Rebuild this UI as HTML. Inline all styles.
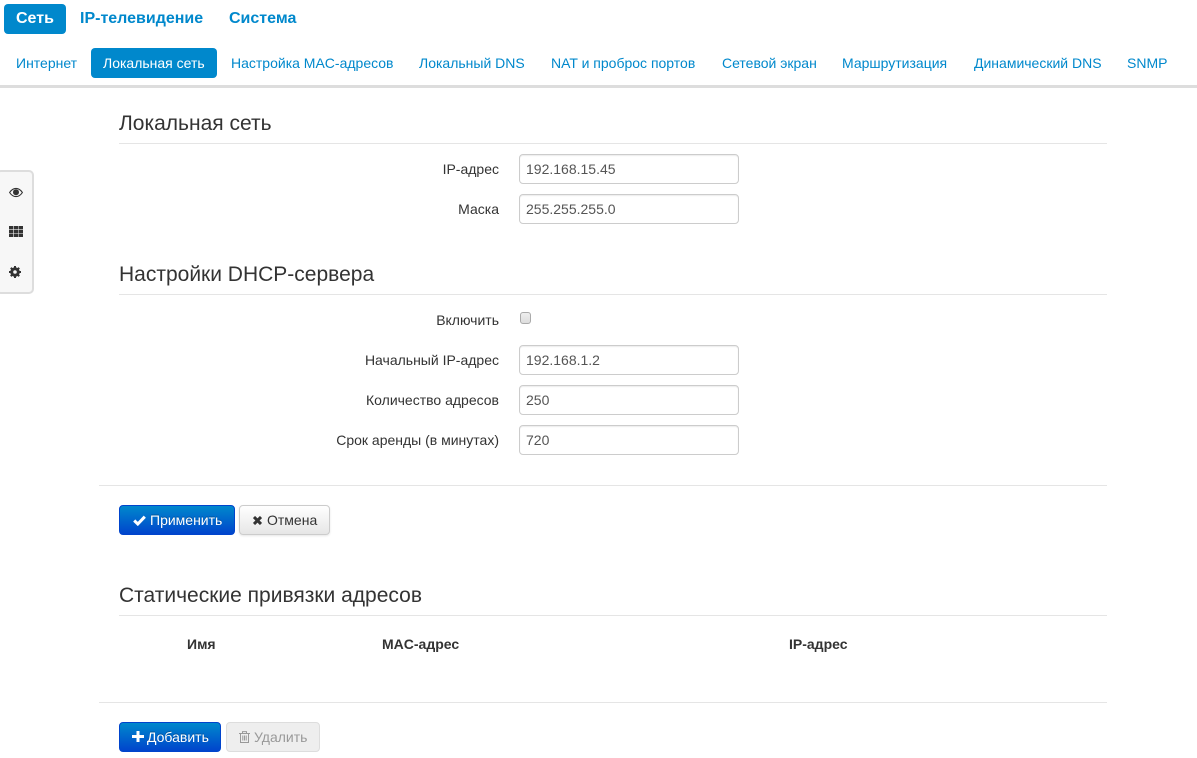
<!DOCTYPE html>
<html><head><meta charset="utf-8">
<style>
html,body{margin:0;padding:0;background:#fff;width:1197px;height:758px;overflow:hidden}
body{position:relative;font-family:"Liberation Sans",sans-serif;font-size:14px;color:#333}
.a{position:absolute;white-space:nowrap}
.t{font-weight:bold;font-size:16px;color:#0088cc;line-height:30px;top:4px}
.s{color:#0088cc;line-height:30px;top:48px}
.pill{position:absolute;background:#0088cc;border-radius:4px}
.h{left:119px;font-size:21px;line-height:24px;color:#333}
.hr{position:absolute;height:1px;background:#e5e5e5}
.l{right:698px;line-height:20px;color:#333}
.i{position:absolute;left:519px;height:28px;border:1px solid #ccc;border-radius:4px;padding:0 6px 0 6px;line-height:28px;color:#555;box-shadow:inset 0 1px 1px rgba(0,0,0,.075);background:#fff;width:206px}
.b{position:absolute;box-sizing:border-box;height:30px;border-radius:4px;line-height:28px;white-space:nowrap}
.p{background:linear-gradient(#0088cc,#0044cc);border:1px solid #04c;color:#fff;text-shadow:0 -1px 0 rgba(0,0,0,.25)}
.d{background:linear-gradient(#fff,#e6e6e6);border:1px solid #ccc;color:#333;box-shadow:0 1px 2px rgba(0,0,0,.1)}
.th{font-weight:bold;line-height:20px;top:634px;color:#333}
svg{position:absolute}
</style></head><body>
<div class="pill" style="left:4px;top:4px;width:62px;height:30px"></div>
<div class="a t" style="left:16px;color:#fff">Сеть</div>
<div class="a t" style="left:80px">IP-телевидение</div>
<div class="a t" style="left:229px">Система</div>
<div class="pill" style="left:91px;top:48px;width:126px;height:30px"></div>
<div class="a s" style="left:16px">Интернет</div>
<div class="a s" style="left:103px;color:#fff">Локальная сеть</div>
<div class="a s" style="left:231px">Настройка MAC-адресов</div>
<div class="a s" style="left:419px">Локальный DNS</div>
<div class="a s" style="left:551px">NAT и проброс портов</div>
<div class="a s" style="left:722px">Сетевой экран</div>
<div class="a s" style="left:842px">Маршрутизация</div>
<div class="a s" style="left:974px">Динамический DNS</div>
<div class="a s" style="left:1127px">SNMP</div>
<div class="a" style="left:0;top:85px;width:1197px;height:3px;background:#ddd"></div>

<div class="a" style="left:-4px;top:170px;width:36px;height:120px;box-sizing:content-box;background:#f7f7f7;border:2px solid #ddd;border-radius:5px;width:34px"></div>
<svg style="left:9px;top:187px" width="14" height="11" viewBox="0 0 14 11"><path d="M.6 5.500C2.400 2.700 4.500 1.400 7 1.400s4.600 1.300 6.400 4.100C11.600 8.300 9.500 9.600 7 9.600S2.400 8.300.6 5.500z" fill="none" stroke="#333" stroke-width="1.100"/><circle cx="7" cy="5.200" r="3" fill="#333"/></svg>
<svg style="left:9px;top:226px" width="14" height="11" viewBox="0 0 14 11" fill="#333"><rect x="0" y="0" width="4.300" height="3.300"/><rect x="4.900" y="0" width="4.300" height="3.300"/><rect x="9.700" y="0" width="4.300" height="3.300"/><rect x="0" y="3.900" width="4.300" height="3.300"/><rect x="4.900" y="3.900" width="4.300" height="3.300"/><rect x="9.700" y="3.900" width="4.300" height="3.300"/><rect x="0" y="7.700" width="4.300" height="3.300"/><rect x="4.900" y="7.700" width="4.300" height="3.300"/><rect x="9.700" y="7.700" width="4.300" height="3.300"/></svg>
<svg style="left:9px;top:266px" width="12" height="12" viewBox="0 0 12 12"><circle cx="6" cy="6" r="3.300" fill="none" stroke="#333" stroke-width="3"/><path d="M6 0v12M0 6h12M1.800 1.800l8.400 8.400M10.200 1.800l-8.400 8.400" stroke="#333" stroke-width="2" stroke-dasharray="2.200 7.600 2.200"/></svg>

<div class="a h" style="top:112px">Локальная сеть</div>
<div class="hr" style="left:119px;top:143px;width:988px"></div>
<div class="a l" style="top:159px">IP-адрес</div>
<div class="i" style="top:154px">192.168.15.45</div>
<div class="a l" style="top:199px">Маска</div>
<div class="i" style="top:194px">255.255.255.0</div>

<div class="a h" style="top:263px">Настройки DHCP-сервера</div>
<div class="hr" style="left:119px;top:294px;width:988px"></div>
<div class="a l" style="top:310px">Включить</div>
<div class="a" style="left:520px;top:312px;width:9px;height:10px;border:1px solid #aaa;border-radius:3px;background:linear-gradient(#eee,#ddd)"></div>
<div class="a l" style="top:350px">Начальный IP-адрес</div>
<div class="i" style="top:345px">192.168.1.2</div>
<div class="a l" style="top:390px">Количество адресов</div>
<div class="i" style="top:385px">250</div>
<div class="a l" style="top:430px">Срок аренды (в минутах)</div>
<div class="i" style="top:425px">720</div>

<div class="hr" style="left:99px;top:485px;width:1008px"></div>
<div class="b p" style="left:119px;top:505px;width:116px;padding-left:30px">Применить</div>
<svg style="left:133px;top:515px" width="13" height="11" viewBox="0 0 13 11"><path d="M1.200 5.500L4.800 9l7-7.300" fill="none" stroke="#fff" stroke-width="3"/></svg>
<div class="b d" style="left:239px;top:505px;width:91px;padding-left:27px">Отмена</div>
<svg style="left:253px;top:516px" width="9" height="9" viewBox="0 0 9 9"><path d="M1 1l7 7M8 1L1 8" stroke="#333" stroke-width="3"/></svg>

<div class="a h" style="top:584px">Статические привязки адресов</div>
<div class="hr" style="left:119px;top:615px;width:988px"></div>
<div class="a th" style="left:187px">Имя</div>
<div class="a th" style="left:382px">MAC-адрес</div>
<div class="a th" style="left:789px">IP-адрес</div>
<div class="hr" style="left:99px;top:702px;width:1008px"></div>

<div class="b p" style="left:119px;top:722px;width:102px;padding-left:27px">Добавить</div>
<svg style="left:132px;top:731px" width="12" height="11" viewBox="0 0 12 11"><path d="M6 0v11M0 5.500h12" stroke="#fff" stroke-width="3"/></svg>
<div class="b" style="left:226px;top:722px;width:94px;padding-left:27px;background:#eee;border:1px solid #ddd;color:#999">Удалить</div>
<svg style="left:239px;top:731px" width="11" height="12" viewBox="0 0 11 12"><path d="M0 2.500h11M3.500 2.500V.6h4v1.900M1.500 2.500v9h8v-9M3.800 4.500v5M5.500 4.500v5M7.200 4.500v5" fill="none" stroke="#999" stroke-width="1"/></svg>
</body></html>
